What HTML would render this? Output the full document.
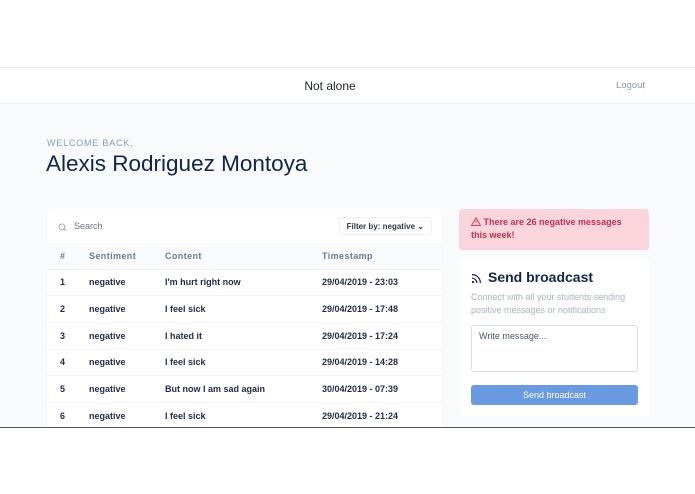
<!DOCTYPE html>
<html><head><meta charset="utf-8"><style>
*{margin:0;padding:0;box-sizing:border-box}
body{width:695px;height:494px;background:#fff;font-family:"Liberation Sans",sans-serif;position:relative;overflow:hidden}
.app{position:absolute;left:0;top:67px;width:695px;height:360px;background:#f8fafc;border-top:1px solid #e2e8f0;overflow:hidden}
.bottom{position:absolute;left:0;top:427px;width:695px;height:1px;background:#555}
.hdr{position:absolute;left:0;top:0;width:695px;height:36px;background:#fff;border-bottom:1px solid #edf0f4}
.brand{position:absolute;left:0;width:660px;text-align:center;top:11px;font-size:12px;color:#1a202c}
.logout{position:absolute;right:50px;top:12px;font-size:9.5px;color:#8a96ad}
.wb{position:absolute;left:47px;top:70px;font-size:9px;letter-spacing:.8px;color:#8a9ab5}
.name{position:absolute;left:46px;top:83px;font-size:22.5px;color:#13244a}
.card{position:absolute;left:47px;top:141px;width:395px;height:240px;background:#fff;border-radius:4px;box-shadow:0 1px 2px rgba(0,0,0,.04)}
.search{position:absolute;left:27px;top:12px;font-size:9px;color:#6b7280}
.filter{position:absolute;right:10px;top:8px;height:18px;padding:0 7px;border:1px solid #eceff3;border-radius:3px;font-size:8px;color:#2d3748;line-height:17px;font-weight:bold}
table{position:absolute;left:0;top:34px;width:395px;border-collapse:collapse;font-size:9px}
th{background:#f8fafc;height:26px;text-align:left;color:#6b7a93;font-weight:bold;letter-spacing:.4px;font-size:9px}
td{height:26.7px;border-top:1px solid #f0f2f5;color:#1f2a44;font-weight:bold}
.alert{position:absolute;left:459px;top:141px;width:190px;height:41px;background:#fbd5dc;border-radius:3px;color:#c0334f;font-size:9px;font-weight:bold;padding:7px 12px;line-height:13px}
.bc{position:absolute;left:460px;top:191px;width:189px;height:157px;background:#fff;border-radius:3px}
.bc h3{position:absolute;left:28px;top:10px;font-size:14px;color:#13244a;font-weight:bold}
.bc p{position:absolute;left:11px;top:32px;width:178px;font-size:9px;line-height:13px;color:#a7b2c6}
.ta{position:absolute;left:11px;top:66px;width:167px;height:47px;border:1px solid #d8dde5;border-radius:3px;font-size:9px;color:#4a5568;padding:5px 7px}
.btn{position:absolute;left:11px;top:126px;width:167px;height:20px;background:#6a9ae0;border-radius:3px;color:#fff;font-size:9px;text-align:center;line-height:20px}
</style></head><body>
<div class="app">
<div class="hdr"><div class="brand">Not alone</div><div class="logout">Logout</div></div>
<div class="wb">WELCOME BACK,</div>
<div class="name">Alexis Rodriguez Montoya</div>
<div class="card">
<svg style="position:absolute;left:11px;top:14px" width="9" height="9" viewBox="0 0 10 10"><circle cx="4.3" cy="4.3" r="3.3" fill="none" stroke="#9aa4b5" stroke-width="1"/><line x1="6.8" y1="6.8" x2="9" y2="9" stroke="#9aa4b5"/></svg>
<div class="search">Search</div>
<div class="filter">Filter by: negative ⌄</div>
<table>
<tr><th style="padding-left:13px;width:42px">#</th><th style="width:76px">Sentiment</th><th style="width:157px">Content</th><th>Timestamp</th></tr>
<tr><td style="padding-left:13px">1</td><td>negative</td><td>I'm hurt right now</td><td>29/04/2019 - 23:03</td></tr>
<tr><td style="padding-left:13px">2</td><td>negative</td><td>I feel sick</td><td>29/04/2019 - 17:48</td></tr>
<tr><td style="padding-left:13px">3</td><td>negative</td><td>I hated it</td><td>29/04/2019 - 17:24</td></tr>
<tr><td style="padding-left:13px">4</td><td>negative</td><td>I feel sick</td><td>29/04/2019 - 14:28</td></tr>
<tr><td style="padding-left:13px">5</td><td>negative</td><td>But now I am sad again</td><td>30/04/2019 - 07:39</td></tr>
<tr><td style="padding-left:13px">6</td><td>negative</td><td>I feel sick</td><td>29/04/2019 - 21:24</td></tr>
</table>
</div>
<div class="alert"><svg width="10" height="9" viewBox="0 0 10 9" style="vertical-align:-1px"><path d="M5 .7L9.4 8.4H.6Z" fill="none" stroke="#c0334f" stroke-width=".9"/><line x1="5" y1="3.3" x2="5" y2="5.8" stroke="#c0334f" stroke-width=".9"/><circle cx="5" cy="7" r=".45" fill="#c0334f"/></svg> There are 26 negative messages this week!</div>
<div class="bc">
<svg style="position:absolute;left:11px;top:14px" width="11" height="11" viewBox="0 0 11 11"><circle cx="2" cy="9" r="1.1" fill="#13244a"/><path d="M1 5.2A4.8 4.8 0 0 1 5.8 10M1 1.6A8.4 8.4 0 0 1 9.4 10" fill="none" stroke="#13244a" stroke-width="1.2"/></svg>
<h3>Send broadcast</h3>
<p>Connect with all your students sending positive messages or notifications</p>
<div class="ta">Write message...</div>
<div class="btn">Send broadcast</div>
</div>
</div>
<div class="bottom"></div>
</body></html>
